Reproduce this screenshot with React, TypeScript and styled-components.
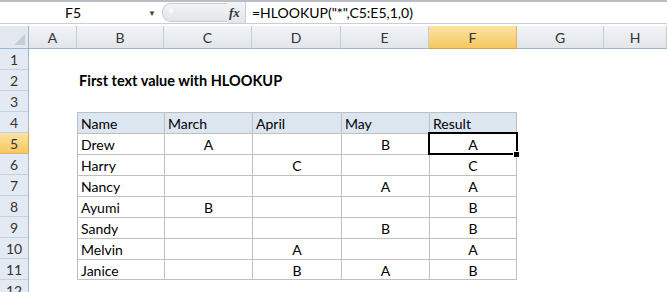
import React from "react";
import styled, { createGlobalStyle, css } from "styled-components";

const GlobalStyle = createGlobalStyle`
  html, body {
    margin: 0;
    padding: 0;
    background: #ffffff;
  }
  body {
    font-family: "Lato", "Liberation Sans", sans-serif;
    color: #000;
  }
`;

const COLS = ["A", "B", "C", "D", "E", "F", "G", "H"];
const WIDTHS = "29px 48px 87px 88px 89px 88px 88px 87px 1fr";

type Row = { name: string; march: string; april: string; may: string; result: string };

const DATA: Row[] = [
  { name: "Drew", march: "A", april: "", may: "B", result: "A" },
  { name: "Harry", march: "", april: "C", may: "", result: "C" },
  { name: "Nancy", march: "", april: "", may: "A", result: "A" },
  { name: "Ayumi", march: "B", april: "", may: "", result: "B" },
  { name: "Sandy", march: "", april: "", may: "B", result: "B" },
  { name: "Melvin", march: "", april: "A", may: "", result: "A" },
  { name: "Janice", march: "", april: "B", may: "A", result: "B" },
];

const Page = styled.div`
  width: 667px;
  height: 292px;
  overflow: hidden;
  background: #fff;
`;

const FormulaBar = styled.div`
  display: flex;
  align-items: center;
  height: 21px;
  border-top: 2px solid #b9bec6;
  border-bottom: 1px solid #c9ced6;
  background: #fff;
`;

const NameBox = styled.div`
  width: 146px;
  display: flex;
  justify-content: center;
  font-size: 14px;
`;

const Dropdown = styled.div`
  width: 12px;
  display: flex;
  justify-content: center;
  font-size: 8px;
  color: #444;
`;

const Knob = styled.div`
  margin-left: 4px;
  width: 64px;
  height: 17px;
  border-radius: 9px 0 0 9px;
  border: 1px solid #c7ccd3;
  border-right: none;
  background: linear-gradient(#f3f4f6, #e2e5ea);
  position: relative;
  &::before {
    content: "";
    position: absolute;
    left: 5px;
    top: 3px;
    width: 8px;
    height: 8px;
    border-radius: 50%;
    background: radial-gradient(circle at 40% 40%, #ffffff, #d9dde3);
  }
`;

const Fx = styled.div`
  width: 12px;
  padding-left: 2px;
  padding-right: 4px;
  font-family: "Liberation Serif", serif;
  font-style: italic;
  font-weight: bold;
  font-size: 13px;
  color: #333;
  border-right: 1px solid #c9ced6;
  height: 21px;
  line-height: 21px;
  background: linear-gradient(#f3f4f6, #e2e5ea);
`;

const Formula = styled.div`
  padding-left: 6px;
  font-size: 14px;
`;

const Grid = styled.div`
  display: grid;
  grid-template-columns: ${WIDTHS};
  grid-template-rows: 23px repeat(12, 21px);
  margin-top: 2px;
`;

const headerBase = css`
  display: flex;
  align-items: center;
  justify-content: center;
  font-size: 14px;
  color: #333;
  box-sizing: border-box;
`;

const Corner = styled.div`
  ${headerBase};
  background: #e4e9f0;
  border-right: 1px solid #9eb6ce;
  border-bottom: 1px solid #9eb6ce;
  position: relative;
  &::after {
    content: "";
    position: absolute;
    right: 3px;
    bottom: 3px;
    border-style: solid;
    border-width: 0 0 11px 11px;
    border-color: transparent transparent #c5ccd6 transparent;
  }
`;

const ColHeader = styled.div<{ $active?: boolean }>`
  ${headerBase};
  background: ${(p) =>
    p.$active ? "linear-gradient(#fbe3a4, #f6c85f)" : "linear-gradient(#f2f4f7, #e1e5ea)"};
  border-right: 1px solid ${(p) => (p.$active ? "#e3b463" : "#c6ccd4")};
  border-bottom: 1px solid ${(p) => (p.$active ? "#d2a343" : "#9eb6ce")};
`;

const RowHeader = styled.div<{ $active?: boolean }>`
  ${headerBase};
  background: ${(p) => (p.$active ? "linear-gradient(#fbe3a4, #f6c85f)" : "#e4eaf3")};
  border-right: 1px solid ${(p) => (p.$active ? "#d2a343" : "#9eb6ce")};
  border-bottom: 1px solid ${(p) => (p.$active ? "#e3b463" : "#c6d1de")};
`;

const Cell = styled.div`
  font-size: 14px;
  display: flex;
  align-items: center;
  white-space: nowrap;
  box-sizing: border-box;
`;

const Title = styled(Cell)`
  grid-column: 3 / span 4;
  font-weight: bold;
  font-size: 14.5px;
  padding-left: 2px;
`;

const TableCell = styled(Cell)<{
  $head?: boolean;
  $center?: boolean;
  $lastCol?: boolean;
  $lastRow?: boolean;
}>`
  border-top: 1px solid #bfbfbf;
  border-left: 1px solid #bfbfbf;
  ${(p) => p.$lastCol && "border-right: 1px solid #bfbfbf;"}
  ${(p) => p.$lastRow && "border-bottom: 1px solid #bfbfbf;"}
  background: ${(p) => (p.$head ? "#dce6f1" : "#fff")};
  justify-content: ${(p) => (p.$center ? "center" : "flex-start")};
  padding-left: ${(p) => (p.$center ? "0" : "3px")};
  padding-top: 1px;
`;

const ActiveCell = styled(TableCell)`
  position: relative;
  outline: 2px solid #000;
  outline-offset: -1px;
  z-index: 2;
  &::after {
    content: "";
    position: absolute;
    right: -4px;
    bottom: -4px;
    width: 5px;
    height: 5px;
    background: #000;
    border: 1px solid #fff;
  }
`;

const Empty = styled.div``;

function blanks(n: number, key: string) {
  return Array.from({ length: n }, (_, i) => <Empty key={key + i} />);
}

export default function App() {
  const rows: React.ReactNode[] = [];

  // row 1
  rows.push(<RowHeader key="r1">1</RowHeader>, ...blanks(8, "b1-"));
  // row 2
  rows.push(
    <RowHeader key="r2">2</RowHeader>,
    <Empty key="a2" />,
    <Title key="t2">First text value with HLOOKUP</Title>,
    ...blanks(3, "b2-")
  );
  // row 3
  rows.push(<RowHeader key="r3">3</RowHeader>, ...blanks(8, "b3-"));
  // row 4 header
  const heads = ["Name", "March", "April", "May", "Result"];
  rows.push(
    <RowHeader key="r4">4</RowHeader>,
    <Empty key="a4" />,
    ...heads.map((h, i) => (
      <TableCell key={"h" + i} $head $lastCol={i === 4}>
        {h}
      </TableCell>
    )),
    ...blanks(2, "b4-")
  );
  DATA.forEach((d, i) => {
    const n = i + 5;
    const last = i === DATA.length - 1;
    const Result = n === 5 ? ActiveCell : TableCell;
    rows.push(
      <RowHeader key={"r" + n} $active={n === 5}>
        {n}
      </RowHeader>,
      <Empty key={"a" + n} />,
      <TableCell key={"n" + n} $lastRow={last}>
        {d.name}
      </TableCell>,
      <TableCell key={"m" + n} $center $lastRow={last}>
        {d.march}
      </TableCell>,
      <TableCell key={"p" + n} $center $lastRow={last}>
        {d.april}
      </TableCell>,
      <TableCell key={"y" + n} $center $lastRow={last}>
        {d.may}
      </TableCell>,
      <Result key={"res" + n} $center $lastCol $lastRow={last}>
        {d.result}
      </Result>,
      ...blanks(2, "b" + n + "-")
    );
  });
  rows.push(<RowHeader key="r12">12</RowHeader>, ...blanks(8, "b12-"));

  return (
    <Page>
      <GlobalStyle />
      <FormulaBar>
        <NameBox>F5</NameBox>
        <Dropdown>▼</Dropdown>
        <Knob />
        <Fx>fx</Fx>
        <Formula>=HLOOKUP("*",C5:E5,1,0)</Formula>
      </FormulaBar>
      <Grid>
        <Corner />
        {COLS.map((c) => (
          <ColHeader key={c} $active={c === "F"}>
            {c}
          </ColHeader>
        ))}
        {rows}
      </Grid>
    </Page>
  );
}
